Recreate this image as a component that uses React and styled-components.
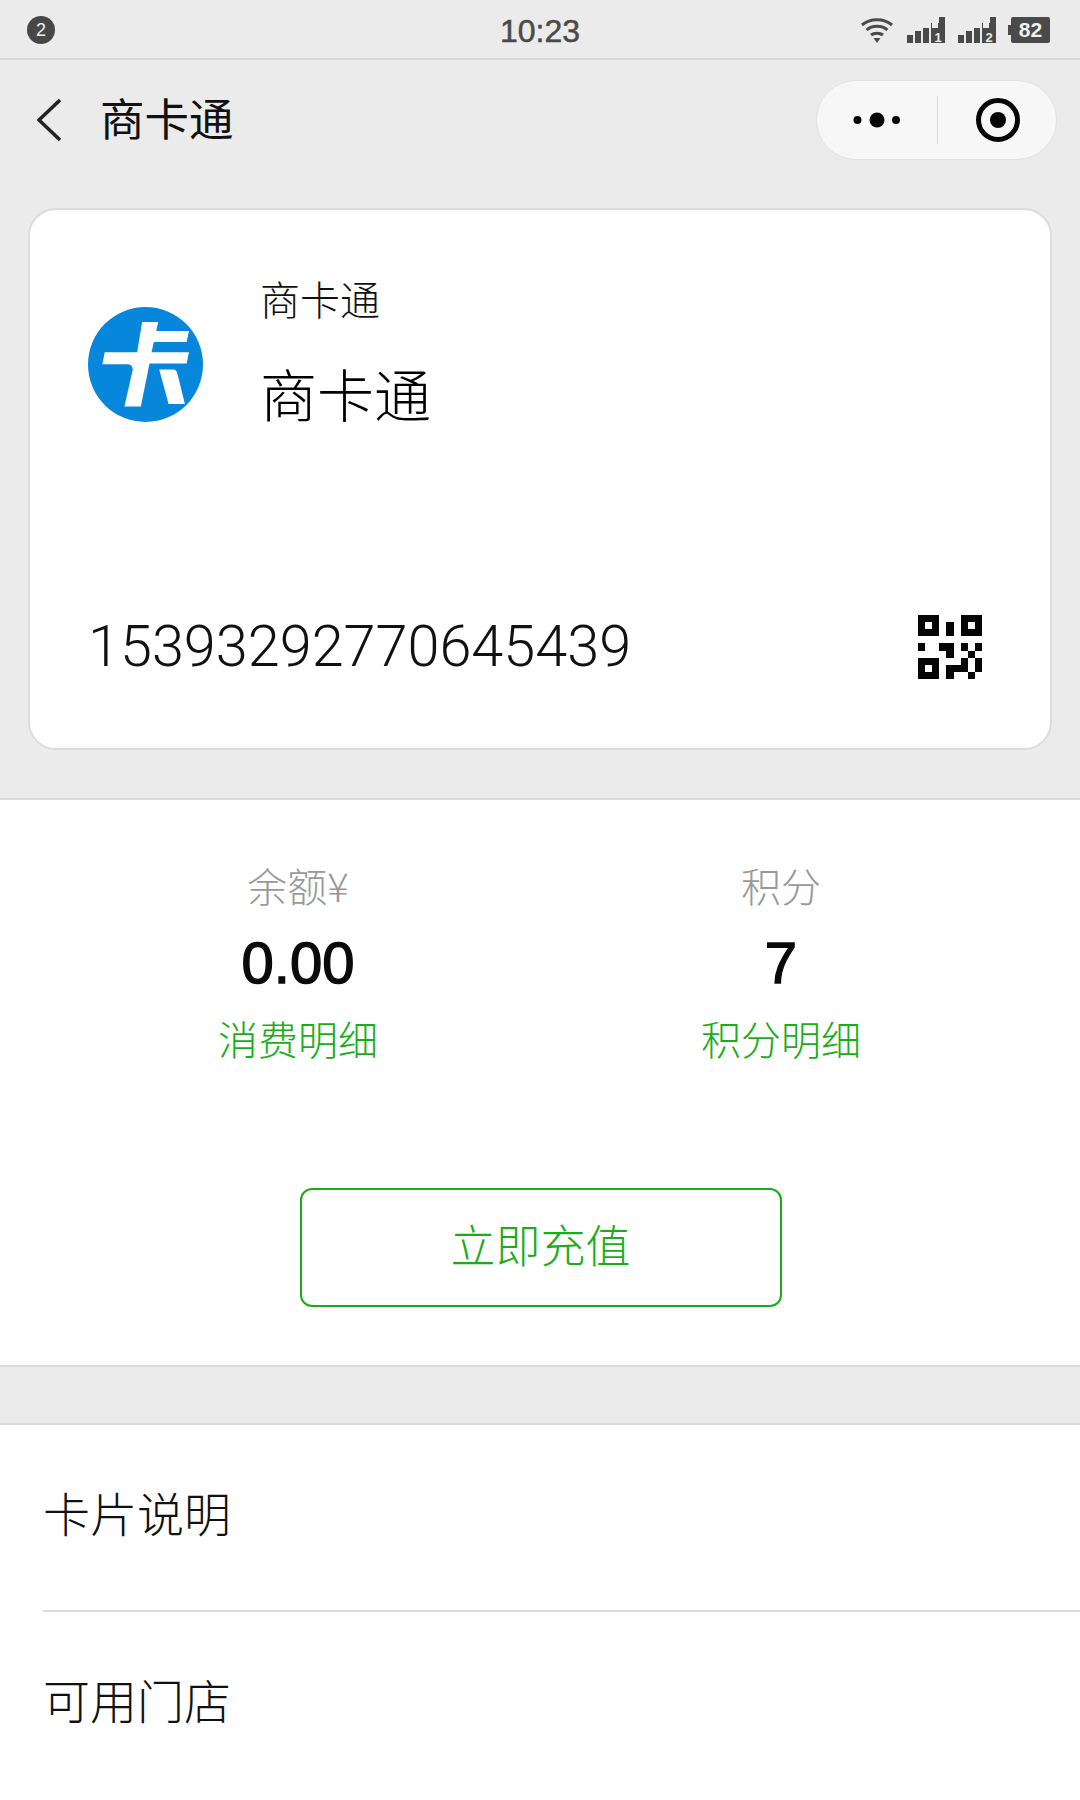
import React from "react";
import styled, { createGlobalStyle } from "styled-components";

const GlobalStyle = createGlobalStyle`
  html, body {
    margin: 0;
    padding: 0;
    background: #fff;
  }
  * {
    box-sizing: border-box;
  }
`;

const CJK = `"Liberation Sans", "Noto Sans CJK SC", sans-serif`;

const Page = styled.div`
  width: 1080px;
  height: 1800px;
  overflow: hidden;
  background: #fff;
  font-family: ${CJK};
  font-weight: 300;
  color: #111;
`;

const StatusBar = styled.div`
  height: 60px;
  padding: 2px 27px 0;
  display: grid;
  grid-template-columns: 1fr auto 1fr;
  align-items: center;
  background: #ebebeb;
  border-bottom: 2px solid #d8d8d8;
`;

const Badge = styled.div`
  width: 28px;
  height: 28px;
  border-radius: 50%;
  background: #474747;
  color: #f2f2f2;
  font-size: 18px;
  font-weight: 400;
  line-height: 28px;
  text-align: center;
`;

const Time = styled.div`
  font-size: 32px;
  font-weight: 400;
  line-height: 36px;
  margin-top: 2px;
  color: #4a4a4a;
  -webkit-text-stroke: 0.5px #4a4a4a;
`;

const StatusIcons = styled.div`
  display: flex;
  justify-content: flex-end;
  align-items: center;
  gap: 13px;
  padding-right: 3px;
`;

const Battery = styled.div`
  position: relative;
  width: 39px;
  height: 26px;
  border-radius: 2px;
  background: #4a4a4a;
  color: #f0f0f0;
  font-size: 21px;
  font-weight: 700;
  line-height: 26px;
  text-align: center;
  margin-left: 2px;
  &::before {
    content: "";
    position: absolute;
    left: -3px;
    top: 8px;
    width: 3px;
    height: 10px;
    background: #4a4a4a;
  }
`;

const Header = styled.div`
  height: 740px;
  padding-bottom: 48px;
  background: #ebebeb;
  border-bottom: 2px solid #dcdcdc;
`;

const NavBar = styled.div`
  height: 148px;
  padding: 0 23px 28px 37px;
  display: flex;
  align-items: center;
`;

const Title = styled.div`
  margin: 2px 0 0 39px;
  font-size: 44.500px;
  font-weight: 400;
  line-height: 60px;
  flex: 1;
  color: #111;
`;

const Capsule = styled.div`
  width: 241px;
  height: 80px;
  display: flex;
  align-items: center;
  border-radius: 40px;
  background: #f7f7f7;
  border: 1px solid #e2e2e2;
`;

const CapsuleCell = styled.div`
  width: ${(p) => p.$width}px;
  padding-left: ${(p) => p.$nudge || 0}px;
  display: flex;
  justify-content: center;
  align-items: center;
`;

const CapsuleDivider = styled.div`
  width: 1px;
  height: 48px;
  background: #d8d8d8;
`;

const Card = styled.div`
  margin: 0 28px;
  height: 542px;
  padding: 56px 68px 68px 58px;
  display: flex;
  flex-direction: column;
  justify-content: space-between;
  background: #fff;
  border: 2px solid #dcdcdc;
  border-radius: 28px;
`;

const CardTop = styled.div`
  display: flex;
  align-items: flex-start;
  gap: 57px;
`;

const Logo = styled.svg`
  width: 115px;
  height: 115px;
  margin-top: 41px;
  flex: none;
`;

const CardNames = styled.div`
  display: flex;
  flex-direction: column;
  padding-top: 10px;
  gap: 33px;
`;

const Merchant = styled.div`
  font-size: 40px;
  line-height: 50px;
  color: #111;
`;

const CardName = styled.div`
  font-size: 57px;
  line-height: 76px;
  color: #000;
`;

const CardBottom = styled.div`
  display: flex;
  justify-content: space-between;
  align-items: center;
`;

const CardNumber = styled.div`
  font-family: Roboto, "Liberation Sans", sans-serif;
  font-weight: 300;
  font-size: 57.600px;
  line-height: 66px;
  color: #111;
`;

const Stats = styled.div`
  height: 206px;
  margin-top: 60px;
  display: grid;
  grid-template-columns: 482px 484px;
  padding-left: 57px;
`;

const Stat = styled.div`
  display: flex;
  flex-direction: column;
  align-items: center;
`;

const StatLabel = styled.div`
  font-family: "Noto Sans CJK SC", sans-serif;
  font-size: 40px;
  line-height: 50px;
  color: #999;
`;

const StatValue = styled.div`
  font-size: 58px;
  line-height: 64px;
  margin-top: 21px;
  font-weight: 400;
  color: #0a0a0a;
  -webkit-text-stroke: 1.400px #0a0a0a;
`;

const StatLink = styled.div`
  font-size: 40px;
  line-height: 50px;
  margin-top: 21px;
  color: #1aad19;
`;

const ButtonRow = styled.div`
  display: flex;
  justify-content: center;
  margin-top: 122px;
  padding-left: 1px;
`;

const OutlineButton = styled.div`
  width: 482px;
  height: 119px;
  padding-bottom: 8px;
  display: flex;
  justify-content: center;
  align-items: center;
  border: 2px solid #1aad19;
  border-radius: 12px;
  font-size: 45px;
  color: #1aad19;
`;

const Gap = styled.div`
  height: 60px;
  margin-top: 58px;
  background: #ebebeb;
  border-top: 2px solid #dcdcdc;
  border-bottom: 2px solid #dcdcdc;
`;

const Row = styled.div`
  height: 187px;
  margin-left: 43px;
  padding-bottom: ${(p) => (p.$last ? "15px" : "13px")};
  display: flex;
  align-items: center;
  font-size: 47px;
  color: #111;
  border-bottom: ${(p) => (p.$last ? "none" : "2px solid #dcdcdc")};
`;

const WifiIcon = () => (
  <svg width="34" height="28" viewBox="0 0 34 28" fill="none">
    <path d="M2 9C10 2 24 2 32 9" stroke="#4a4a4a" strokeWidth="3" />
    <path d="M6.5 14C12 9 22 9 27.5 14" stroke="#4a4a4a" strokeWidth="3" />
    <path d="M11 19C14 16.500 20 16.500 23 19" stroke="#4a4a4a" strokeWidth="3" />
    <path d="M13.500 22L20.500 22L17 27Z" fill="#4a4a4a" />
  </svg>
);

const SignalIcon = ({ slot }) => (
  <svg width="38" height="26" viewBox="0 0 38 26">
    <rect x="0" y="18" width="6" height="8" fill="#4a4a4a" />
    <rect x="8" y="14" width="6" height="12" fill="#4a4a4a" />
    <rect x="16" y="11" width="6" height="15" fill="#4a4a4a" />
    <rect x="24" y="6" width="14" height="20" fill="#4a4a4a" />
    <rect x="32" y="0" width="6" height="10" fill="#4a4a4a" />
    <rect x="25" y="6" width="6" height="5" fill="#ebebeb" />
    <text
      x="31"
      y="24.500"
      textAnchor="middle"
      fontSize="13"
      fontWeight="700"
      fontFamily="Liberation Sans, sans-serif"
      fill="#ebebeb"
    >
      {slot}
    </text>
  </svg>
);

const MoreIcon = () => (
  <svg width="48" height="16" viewBox="0 0 48 16" fill="#050505">
    <circle cx="4.500" cy="8" r="4" />
    <circle cx="24" cy="8" r="7.500" />
    <circle cx="43" cy="8" r="4" />
  </svg>
);

const RecordIcon = () => (
  <svg width="46" height="46" viewBox="0 0 46 46">
    <circle cx="23" cy="23" r="19.500" fill="none" stroke="#050505" strokeWidth="5" />
    <circle cx="23" cy="23" r="8" fill="#050505" />
  </svg>
);

const BackIcon = () => (
  <svg width="24" height="44" viewBox="0 0 24 44" fill="none">
    <path d="M23 2L2 22L23 42" stroke="#222" strokeWidth="3.500" />
  </svg>
);

const CardLogo = () => (
  <Logo viewBox="83 83 344 344">
    <circle cx="255" cy="255" r="172" fill="#0787dc" />
    <path
      fill="#fff"
      d="M245 128L293 128L287 155L385 155L378 188L280 188L273 218L385 218L378 252L267 252L241 381L192 381L217 270Q216 254 200 254L126 254L133 218L230 218Z"
    />
    <path fill="#fff" d="M296 270L340 270Q348 272 351 285L373 373L324 373Z" />
  </Logo>
);

// cells of the 9x9 code, finders are drawn apart
const qrCells = [
  [4, 1], [4, 2],
  [0, 4], [3, 4], [4, 4], [6, 4], [8, 4],
  [4, 5], [7, 5],
  [6, 6], [8, 6],
  [4, 7], [5, 7], [6, 7], [8, 7],
  [4, 8], [7, 8],
];

const QrFinder = ({ x, y }) => (
  <path
    fillRule="evenodd"
    d={`M${x} ${y}h3v3h-3zM${x + 1} ${y + 1}v1h1v-1z`}
  />
);

const QrIcon = () => (
  <svg width="64" height="64" viewBox="0 0 9 9" fill="#050505" shapeRendering="crispEdges">
    <QrFinder x={0} y={0} />
    <QrFinder x={6} y={0} />
    <QrFinder x={0} y={6} />
    {qrCells.map(([x, y]) => (
      <rect key={`${x}-${y}`} x={x} y={y} width="1" height="1" />
    ))}
  </svg>
);

export default function App() {
  return (
    <Page>
      <GlobalStyle />
      <StatusBar>
        <Badge>2</Badge>
        <Time>10:23</Time>
        <StatusIcons>
          <WifiIcon />
          <SignalIcon slot="1" />
          <SignalIcon slot="2" />
          <Battery>82</Battery>
        </StatusIcons>
      </StatusBar>
      <Header>
        <NavBar>
          <BackIcon />
          <Title>商卡通</Title>
          <Capsule>
            <CapsuleCell $width={120}>
              <MoreIcon />
            </CapsuleCell>
            <CapsuleDivider />
            <CapsuleCell $width={118} $nudge={2}>
              <RecordIcon />
            </CapsuleCell>
          </Capsule>
        </NavBar>
        <Card>
          <CardTop>
            <CardLogo />
            <CardNames>
              <Merchant>商卡通</Merchant>
              <CardName>商卡通</CardName>
            </CardNames>
          </CardTop>
          <CardBottom>
            <CardNumber>15393292770645439</CardNumber>
            <QrIcon />
          </CardBottom>
        </Card>
      </Header>
      <Stats>
        <Stat>
          <StatLabel>余额¥</StatLabel>
          <StatValue>0.00</StatValue>
          <StatLink>消费明细</StatLink>
        </Stat>
        <Stat>
          <StatLabel>积分</StatLabel>
          <StatValue>7</StatValue>
          <StatLink>积分明细</StatLink>
        </Stat>
      </Stats>
      <ButtonRow>
        <OutlineButton>立即充值</OutlineButton>
      </ButtonRow>
      <Gap />
      <Row>卡片说明</Row>
      <Row $last>可用门店</Row>
    </Page>
  );
}
